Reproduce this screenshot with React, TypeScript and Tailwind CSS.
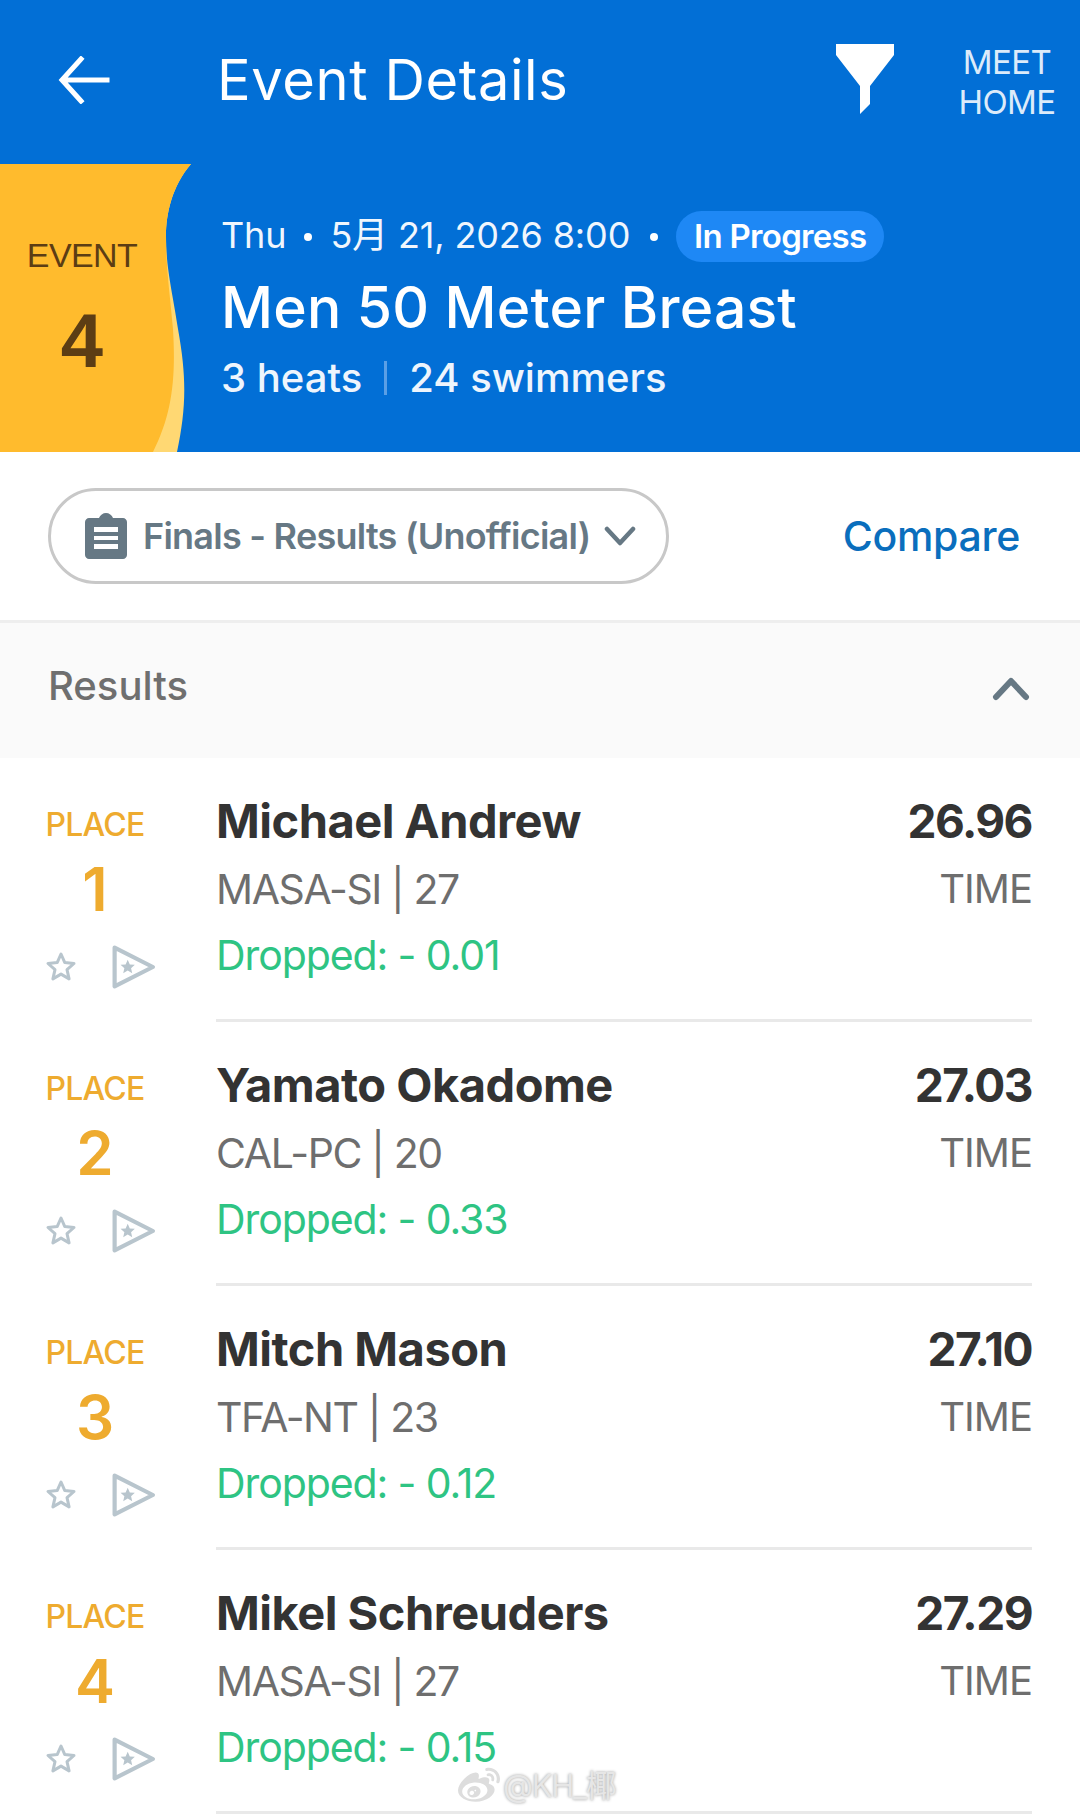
import { FaWeibo } from "react-icons/fa";

const results = [
  { place: 1, name: "Michael Andrew", team: "MASA-SI | 27", drop: "Dropped: - 0.01", time: "26.96" },
  { place: 2, name: "Yamato Okadome", team: "CAL-PC | 20", drop: "Dropped: - 0.33", time: "27.03" },
  { place: 3, name: "Mitch Mason", team: "TFA-NT | 23", drop: "Dropped: - 0.12", time: "27.10" },
  { place: 4, name: "Mikel Schreuders", team: "MASA-SI | 27", drop: "Dropped: - 0.15", time: "27.29" },
];

function StarIcon() {
  return (
    <svg width="32" height="32" viewBox="0 0 32 32" fill="none" stroke="#b8c5cd" strokeWidth="3" strokeLinejoin="round">
      <path d="M16 3l3.800 8.600 9.200.9-7 6.200 2.100 9.200-8.100-4.800-8.100 4.800 2.100-9.200-7-6.200 9.200-.9z" />
    </svg>
  );
}

function PennantIcon() {
  return (
    <svg width="44" height="44" viewBox="0 0 42 42" fill="none">
      <path d="M2.500 2.500L39 21 2.500 39.500z" stroke="#b8c5cd" strokeWidth="4" strokeLinejoin="round" />
      <path d="M15 14l2 4.500 4.800.4-3.600 3.200 1.100 4.800-4.300-2.500-4.300 2.500 1.100-4.800-3.600-3.200 4.800-.4z" fill="#b8c5cd" />
    </svg>
  );
}

function ResultRow({ place, name, team, drop, time }: (typeof results)[number]) {
  return (
    <div className="flex h-[264px] pr-[48px]">
      <div className="flex w-[216px] shrink-0 flex-col items-center pr-[26px] pt-[51px]">
        <div className="text-[32px] leading-[32px] font-medium tracking-[-0.8px] text-[#eeab2f]">PLACE</div>
        <div className="mt-[18px] text-[60px] leading-[60px] font-semibold text-[#eeab2f]">{place}</div>
        <div className="ml-[10px] mt-[26px] flex items-center gap-[35px]">
          <StarIcon />
          <PennantIcon />
        </div>
      </div>
      <div className="flex flex-1 justify-between border-b-[3px] border-[#e9e9e9] pt-[35px]">
        <div>
          <div className="text-[47px] leading-[56px] font-bold tracking-[-0.5px] text-[#333333]">{name}</div>
          <div className="mt-[12px] text-[41px] leading-[56px] tracking-[-1.4px] text-[#6e6e6e]">{team}</div>
          <div className="mt-[10px] text-[41px] leading-[56px] tracking-[-1.1px] text-[#2ec483]">{drop}</div>
        </div>
        <div className="text-right">
          <div className="text-[46px] leading-[56px] font-bold tracking-[-1.5px] text-[#333333]">{time}</div>
          <div className="mt-[12px] text-[40px] leading-[56px] tracking-[-1px] text-[#6e6e6e]">TIME</div>
        </div>
      </div>
    </div>
  );
}

export default function App() {
  return (
    <div className="relative h-[1815px] w-[1080px] overflow-hidden bg-white font-['Inter',sans-serif]">
      <header className="flex h-[164px] items-center bg-[#026fd6] text-white">
        <div className="mt-[-4px] flex w-[217px] shrink-0 justify-start pl-[58px]">
          <svg width="52" height="48" viewBox="0 0 52 48" fill="none" stroke="white" strokeWidth="5" strokeLinecap="square" strokeLinejoin="miter">
            <path d="M23 3L4 24l19 21M6 24h43" />
          </svg>
        </div>
        <h1 className="mt-[-4px] flex-1 text-[56px] leading-none tracking-[0.6px]">Event Details</h1>
        <svg className="mr-[186px] mt-[-6px]" width="58" height="70" viewBox="0 0 58 70" fill="white">
          <path d="M0 0h58v11L34 42v18L24 70V42L0 11z" />
        </svg>
        <div className="absolute left-[957px] top-[42px] w-[100px] text-center text-[33px] leading-[40px] tracking-[-0.6px] text-[#dcebfa]">
          MEET
          <br />
          HOME
        </div>
      </header>

      <section className="relative flex h-[288px] bg-[#026fd6] text-white">
        <svg className="absolute left-0 top-0" width="200" height="288" viewBox="0 0 200 288">
          <path d="M0 0H191C172 22 166 50 166 72C166 105 172 125 178 165C187 215 186 245 177 288H0z" fill="#ffd873" />
          <path d="M0 0H191C172 22 166 50 166 72C166 105 170 130 173 165C176 215 172 250 153 288H0z" fill="#ffbb2d" />
        </svg>
        <div className="relative flex w-[164px] shrink-0 flex-col items-center pt-[74px] font-['Liberation_Sans',sans-serif] text-[#5c3d14]">
          <div className="text-[34px] leading-[34px] tracking-[-0.6px]">EVENT</div>
          <div className="mt-[31px] text-[76px] leading-[76px] font-bold">4</div>
        </div>
        <div className="relative pl-[57px] pt-[47px]">
          <div className="flex h-[51px] items-center text-[36px] tracking-[-0.15px] font-['Inter','Noto_Sans_CJK_SC',sans-serif] text-[#f0f6fd]">
            <span className="mt-[-4px]">Thu</span>
            <span className="mx-[18px] h-[8px] w-[8px] rounded-full bg-white" />
            <span className="mt-[-4px]">5月 21, 2026 8:00</span>
            <span className="ml-[20px] mr-[18px] h-[8px] w-[8px] rounded-full bg-white" />
            <span className="flex h-[51px] w-[208px] items-center justify-center rounded-full bg-[#1e88f5] text-[33px] font-semibold tracking-[-0.7px] text-white">
              In Progress
            </span>
          </div>
          <div className="mt-[12px] text-[57px] leading-[68px] font-medium tracking-[0.2px]">Men 50 Meter Breast</div>
          <div className="mt-[11px] flex items-center text-[40px] leading-[50px] font-medium tracking-[0px] text-[#eef5fd]">
            <span>3 heats</span>
            <span className="mx-[22px] h-[34px] w-[3px] bg-[#5a9fe6]" />
            <span>24 swimmers</span>
          </div>
        </div>
      </section>

      <div className="flex h-[168px] items-center justify-between pl-[48px] pr-[60px]">
        <div className="flex h-[96px] w-[621px] items-center rounded-full border-[3px] border-[#c8c8c8] pl-[34px]">
          <svg width="42" height="46" viewBox="0 0 42 46" fill="#667884">
            <path fillRule="evenodd" d="M4 5h10c1-3 4-5 7-5s6 2 7 5h10c2 0 4 2 4 4v33c0 2-2 4-4 4H4c-2 0-4-2-4-4V9c0-2 2-4 4-4zM9 14v5h24v-5zM9 23v4h24v-4zM9 31v5h24v-5z" />
          </svg>
          <span className="ml-[16px] text-[36px] font-semibold tracking-[-0.75px] text-[#667884]">Finals - Results (Unofficial)</span>
          <svg className="ml-[14px]" width="32" height="20" viewBox="0 0 32 20" fill="none" stroke="#667884" strokeWidth="4.500" strokeLinecap="round" strokeLinejoin="round">
            <path d="M3 3l13 14L29 3" />
          </svg>
        </div>
        <span className="mt-[2px] text-[41px] font-medium tracking-[-0.3px] text-[#0a6ebd]">Compare</span>
      </div>

      <div className="flex h-[138px] items-center justify-between border-t-[3px] border-[#eeeeee] bg-[#fafafa] pb-[10px] pl-[48px] pr-[50px]">
        <span className="text-[40px] font-medium tracking-[0px] text-[#6f6f6f]">Results</span>
        <svg className="mt-[6px]" width="38" height="24" viewBox="0 0 38 24" fill="none" stroke="#667884" strokeWidth="6" strokeLinecap="round" strokeLinejoin="round">
          <path d="M4 20L19 4l15 16" />
        </svg>
      </div>

      <div>
        {results.map((r) => (
          <ResultRow key={r.place} {...r} />
        ))}
      </div>

      <div className="absolute left-[458px] top-[1765px] flex items-center gap-[3px] text-[#d9d9d9] [text-shadow:0_0_3px_#9a9a9a]">
        <FaWeibo size={42} color="#dddddd" />
        <span className="font-['Inter','Noto_Sans_CJK_SC',sans-serif] text-[31px] leading-[36px] tracking-[-1.3px] text-[#e6e6e6]">@KH_椰</span>
      </div>
    </div>
  );
}
